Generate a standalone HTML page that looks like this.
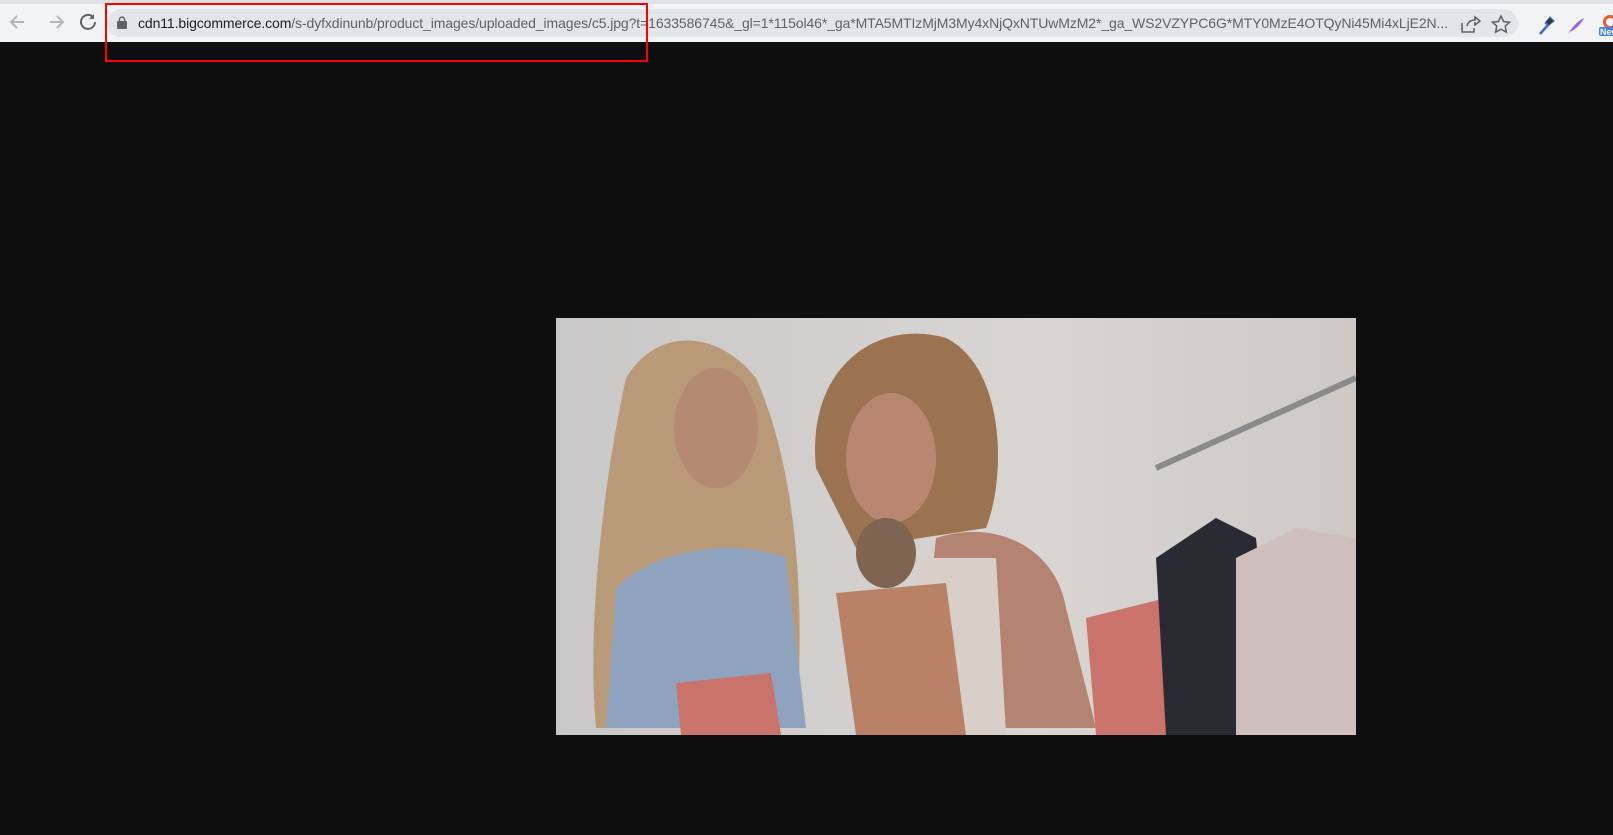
<!DOCTYPE html>
<html><head><meta charset="utf-8">
<style>
*{margin:0;padding:0;box-sizing:border-box}
html,body{width:1613px;height:835px;overflow:hidden;background:#0e0e0e;font-family:"Liberation Sans",sans-serif}
.bar{position:absolute;left:0;top:0;width:1613px;height:42px;background:#f1f3f4}
.tabline{position:absolute;left:0;top:0;width:1613px;height:4px;background:#dee1e6}
.omni{position:absolute;left:107px;top:9px;width:1411px;height:28px;border-radius:14px;background:#e3e5e8}
.url{position:absolute;left:138px;top:15px;font-size:14px;color:#5f6368;white-space:nowrap;letter-spacing:-0.1px}
.url b{font-weight:normal;color:#202124}
.red{position:absolute;left:105px;top:3px;width:543px;height:59px;border:2px solid #f00}
.photo{position:absolute;left:556px;top:318px;width:800px;height:417px}
</style></head><body>
<div class="bar"><div class="tabline"></div>
<svg style="position:absolute;left:8px;top:12px" width="90" height="20" viewBox="0 0 90 20">
<path d="M16 10H4M9 4L3 10l6 6" stroke="#b4b7ba" stroke-width="2" fill="none"/>
<path d="M42 10h12M49 4l6 6-6 6" stroke="#b4b7ba" stroke-width="2" fill="none"/>
<path d="M87 10a7 7 0 1 1-2-5" stroke="#5f6368" stroke-width="2" fill="none"/><path d="M86 2v5h-5" fill="#5f6368"/>
</svg>
<div class="omni"></div>
<svg style="position:absolute;left:117px;top:16px" width="10" height="13" viewBox="0 0 10 13"><rect x="0" y="5" width="10" height="8" rx="1" fill="#5f6368"/><path d="M2.5 5V3.5a2.5 2.5 0 0 1 5 0V5" stroke="#5f6368" stroke-width="1.5" fill="none"/></svg>
<div class="url"><b>cdn11.bigcommerce.com</b>/s-dyfxdinunb/product_images/uploaded_images/c5.jpg?t=1633586745&amp;_gl=1*115ol46*_ga*MTA5MTIzMjM3My4xNjQxNTUwMzM2*_ga_WS2VZYPC6G*MTY0MzE4OTQyNi45Mi4xLjE2N...</div>
<svg style="position:absolute;left:1460px;top:14px" width="160" height="24" viewBox="0 0 160 24">
<path d="M2 9v9h12v-4M7 12c1-4 4-6 8-6V3l5 4-5 4V8" stroke="#5f6368" stroke-width="1.6" fill="none"/>
<path d="M41 2l2.6 5.5 6 .7-4.4 4 1.2 6-5.4-3-5.4 3 1.2-6-4.4-4 6-.7z" stroke="#5f6368" stroke-width="1.5" fill="none"/>
<path d="M80 20l8-9M86 9l4-5 3 3-5 4z" stroke="#3a6fd0" stroke-width="2.5" fill="none"/><path d="M86 8l4-4 3 3-4 4z" fill="#333"/>
<path d="M108 20c4-6 8-12 16-16-3 6-8 11-14 14" fill="#9b5fe0"/>
<circle cx="150" cy="8" r="7" fill="#f05a28"/><circle cx="150" cy="8" r="4" fill="#fff"/>
<rect x="139" y="13" width="21" height="9" rx="2" fill="#3a82f7"/><text x="140" y="21" font-size="9" font-weight="bold" fill="#fff" font-family="Liberation Sans">New</text>
</svg>
</div>
<div class="red"></div>
<svg class="photo" viewBox="0 0 800 417" preserveAspectRatio="none">
<defs><linearGradient id="bg" x1="0" x2="1"><stop offset="0" stop-color="#c9c8c8"/><stop offset="0.6" stop-color="#d8d5d2"/><stop offset="1" stop-color="#cfc9c6"/></linearGradient></defs>
<rect width="800" height="417" fill="url(#bg)"/>
<path d="M40 410C30 300 50 150 70 60 100 10 160 10 200 60 240 150 250 280 240 410Z" fill="#b89a78"/>
<ellipse cx="160" cy="110" rx="42" ry="60" fill="#b58a72"/>
<path d="M60 270c40-40 120-50 170-30l20 170H50Z" fill="#8fa3bf"/>
<path d="M260 150c-10-100 60-150 130-130 60 30 60 140 40 190l-130 20Z" fill="#9c7350"/>
<ellipse cx="335" cy="140" rx="45" ry="65" fill="#b98672"/>
<path d="M380 220c60-20 120 10 130 70l30 120H360Z" fill="#b58371"/>
<path d="M360 240h80l10 177h-90Z" fill="#d8cfc8"/>
<ellipse cx="330" cy="235" rx="30" ry="35" fill="#7f6451"/>
<path d="M280 275l110-10 20 152H300Z" fill="#b98166"/>
<path d="M120 365l95-10 10 62H125Z" fill="#c9736a"/>
<path d="M530 300l80-20 60 137H540Z" fill="#c9736a"/>
<path d="M600 240l60-40 40 20 20 197h-110Z" fill="#2a2a33"/>
<path d="M680 240l60-30 60 10v197h-120Z" fill="#cfbfbc"/>
<path d="M600 150l200-90" stroke="#8a8a8a" stroke-width="6"/>
</svg>
</body></html>
